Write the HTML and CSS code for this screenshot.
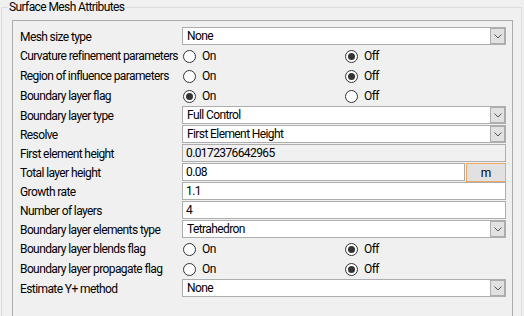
FILE: index.html
```html
<!DOCTYPE html>
<html lang="en">
<head>
  <meta charset="UTF-8" />
  <meta name="viewport" content="width=device-width, initial-scale=1" />
  <title>Surface Mesh Attributes</title>
  <link rel="stylesheet" href="styles.css">
</head>
<body>

  <fieldset class="group">
    <legend class="group-title">Surface Mesh Attributes</legend>

    <div class="panel">

      <div class="row">
        <span class="label">Mesh size type</span>
        <div class="combo">
          <span class="combo-value">None</span>
          <span class="combo-btn"><svg width="8" height="5" viewBox="0 0 8 5"><polyline points="0.5,0.5 4,4 7.5,0.5" /></svg></span>
        </div>
      </div>

      <div class="row radio-row">
        <span class="label">Curvature refinement parameters</span>
        <div class="choices">
          <span class="choice"><span class="radio"></span>On</span>
          <span class="choice"><span class="radio checked"></span>Off</span>
        </div>
      </div>

      <div class="row radio-row">
        <span class="label">Region of influence parameters</span>
        <div class="choices">
          <span class="choice"><span class="radio"></span>On</span>
          <span class="choice"><span class="radio checked"></span>Off</span>
        </div>
      </div>

      <div class="row radio-row">
        <span class="label">Boundary layer flag</span>
        <div class="choices">
          <span class="choice"><span class="radio checked"></span>On</span>
          <span class="choice"><span class="radio"></span>Off</span>
        </div>
      </div>

      <div class="row">
        <span class="label">Boundary layer type</span>
        <div class="combo">
          <span class="combo-value">Full Control</span>
          <span class="combo-btn"><svg width="8" height="5" viewBox="0 0 8 5"><polyline points="0.5,0.5 4,4 7.5,0.5" /></svg></span>
        </div>
      </div>

      <div class="row">
        <span class="label">Resolve</span>
        <div class="combo">
          <span class="combo-value">First Element Height</span>
          <span class="combo-btn"><svg width="8" height="5" viewBox="0 0 8 5"><polyline points="0.5,0.5 4,4 7.5,0.5" /></svg></span>
        </div>
      </div>

      <div class="row">
        <span class="label">First element height</span>
        <input class="text readonly" type="text" value="0.0172376642965" readonly />
      </div>

      <div class="row">
        <span class="label">Total layer height</span>
        <div class="unit">
          <input class="text" type="text" value="0.08" />
          <button class="unit-btn">m</button>
        </div>
      </div>

      <div class="row">
        <span class="label">Growth rate</span>
        <input class="text" type="text" value="1.1" />
      </div>

      <div class="row">
        <span class="label">Number of layers</span>
        <input class="text" type="text" value="4" />
      </div>

      <div class="row">
        <span class="label">Boundary layer elements type</span>
        <div class="combo">
          <span class="combo-value">Tetrahedron</span>
          <span class="combo-btn"><svg width="8" height="5" viewBox="0 0 8 5"><polyline points="0.5,0.5 4,4 7.5,0.5" /></svg></span>
        </div>
      </div>

      <div class="row radio-row">
        <span class="label">Boundary layer blends flag</span>
        <div class="choices">
          <span class="choice"><span class="radio"></span>On</span>
          <span class="choice"><span class="radio checked"></span>Off</span>
        </div>
      </div>

      <div class="row radio-row">
        <span class="label">Boundary layer propagate flag</span>
        <div class="choices">
          <span class="choice"><span class="radio"></span>On</span>
          <span class="choice"><span class="radio checked"></span>Off</span>
        </div>
      </div>

      <div class="row">
        <span class="label">Estimate Y+ method</span>
        <div class="combo">
          <span class="combo-value">None</span>
          <span class="combo-btn"><svg width="8" height="5" viewBox="0 0 8 5"><polyline points="0.5,0.5 4,4 7.5,0.5" /></svg></span>
        </div>
      </div>

    </div>
  </fieldset>

</body>
</html>
```

FILE: styles.css
```css
body {
  margin: 0;
  background: #f0f0f0;
  color: #000;
  font-family: Roboto, "Liberation Sans", sans-serif;
  font-size: 12px;
  letter-spacing: -0.6px;
  line-height: 14px;
}

/* group box */
.group {
  box-sizing: border-box;
  width: 521px;
  margin: 0 0 0 1px;
  padding: 0;
  border: 1px solid #dcdcdc;
  border-bottom: none;
}

.group-title {
  margin-left: 6px;
  padding: 0 1px;
  line-height: 14px;
}

.panel {
  margin: 6px 8px 0 10px;
  padding: 6px 6px 18px 7px;
  border: 1px solid #adadad;
  border-bottom: none;
}

/* rows */
.row {
  display: grid;
  grid-template-columns: 162px 324px;
  align-items: center;
  height: 19px;
}

.radio-row {
  height: 20px;
}

.label {
  white-space: nowrap;
}

/* combo box */
.combo {
  box-sizing: border-box;
  height: 18px;
  align-self: start;
  display: flex;
  background: #fff;
  border: 1px solid #adadad;
}

.combo-value {
  flex: 1;
  padding-left: 4px;
  line-height: 16px;
}

.combo-btn {
  box-sizing: border-box;
  width: 15px;
  display: flex;
  align-items: center;
  justify-content: center;
  background: #e1e1e1;
  border: 1px solid #adadad;
}

.combo-btn svg {
  fill: none;
  stroke: #555;
  stroke-width: 1;
}

/* text fields */
.text {
  box-sizing: border-box;
  width: 100%;
  height: 18px;
  align-self: start;
  margin: 0;
  padding: 0 3px;
  font: inherit;
  letter-spacing: inherit;
  color: #000;
  background: #fff;
  border: 1px solid #adadad;
  border-radius: 0;
  outline: none;
}

.text.readonly {
  background: #f0f0f0;
}

.unit {
  display: flex;
  gap: 1px;
  align-self: start;
}

.unit .text {
  flex: 1;
}

.unit-btn {
  box-sizing: border-box;
  width: 40px;
  height: 19px;
  margin: 0;
  padding: 0;
  font: inherit;
  color: #000;
  background: #e1e1e1;
  border: 1px solid #f0a860;
  border-radius: 0;
}

/* radio buttons */
.choices {
  display: grid;
  grid-template-columns: 1fr 1fr;
}

.choice {
  display: flex;
  align-items: center;
}

.radio {
  box-sizing: border-box;
  width: 13px;
  height: 13px;
  margin: 0 6px 0 1px;
  display: inline-flex;
  align-items: center;
  justify-content: center;
  background: #fff;
  border: 1px solid #333;
  border-radius: 50%;
}

.radio.checked::after {
  content: "";
  width: 7px;
  height: 7px;
  border-radius: 50%;
  background: #333;
}
```
